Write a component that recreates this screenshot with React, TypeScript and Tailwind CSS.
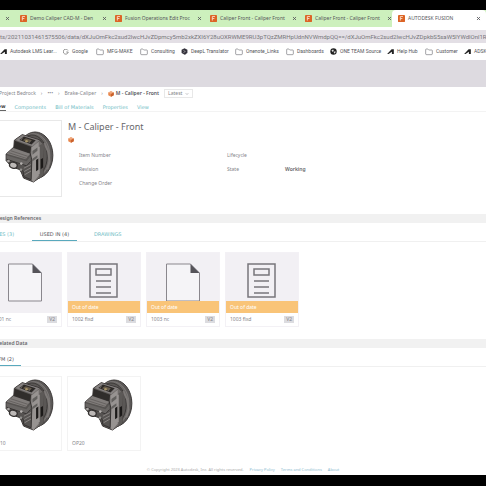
import { ChevronDown, Folder, X } from "lucide-react";

const browserTabs = [
  "Demo Caliper CAD-M - Den",
  "Fusion Operations Edit Proc",
  "Caliper Front - Caliper Front",
  "Caliper Front - Caliper Front",
];

type Bookmark = {
  label: string;
  kind: "autodesk" | "google" | "folder" | "deepl" | "globe";
  width: string;
};

const bookmarks: Bookmark[] = [
  { label: "Autodesk LMS Lear...", kind: "autodesk", width: "w-[63px]" },
  { label: "Google", kind: "google", width: "w-[33px]" },
  { label: "MFG-MAKE", kind: "folder", width: "w-[44px]" },
  { label: "Consulting", kind: "folder", width: "w-[41px]" },
  { label: "DeepL Translator", kind: "deepl", width: "w-[54px]" },
  { label: "Onenote_Links", kind: "folder", width: "w-[51px]" },
  { label: "Dashboards", kind: "folder", width: "w-[44px]" },
  { label: "ONE TEAM Source", kind: "globe", width: "w-[57px]" },
  { label: "Help Hub", kind: "autodesk", width: "w-[38px]" },
  { label: "Customer", kind: "folder", width: "w-[39px]" },
  { label: "ADSK", kind: "autodesk", width: "w-[30px]" },
];

const references = [
  { name: "1001 nc", drawing: false, outOfDate: false },
  { name: "1002 fixd", drawing: true, outOfDate: true },
  { name: "1003 nc", drawing: false, outOfDate: true },
  { name: "1003 fixd", drawing: true, outOfDate: true },
];

function BookmarkIcon({ kind }: { kind: Bookmark["kind"] }) {
  if (kind === "folder") {
    return <Folder className="size-[8px] shrink-0 text-[#77777b]" strokeWidth={2} />;
  }
  if (kind === "google") {
    return (
      <svg viewBox="0 0 24 24" className="size-[6px] shrink-0" fill="none" stroke="#777" strokeWidth="3">
        <path d="M20 6A10 10 0 1 0 21 12H13" />
      </svg>
    );
  }
  if (kind === "deepl") {
    return (
      <svg viewBox="0 0 24 24" className="size-[7px] shrink-0">
        <path d="M12 1l10 5v11l-7 4v3l-4-2-9-5V6z" fill="#34323c" />
        <path d="M8 8l7 4-7 4" fill="none" stroke="#bbb" strokeWidth="2" />
      </svg>
    );
  }
  if (kind === "globe") {
    return (
      <svg viewBox="0 0 24 24" className="size-[7px] shrink-0">
        <circle cx="12" cy="12" r="11" fill="#222" />
        <path d="M5 8l6-3 2 5-4 4zM14 12l6 0-3 7-4-2z" fill="#ddd" />
      </svg>
    );
  }
  return (
    <svg viewBox="0 0 24 18" className="h-[5px] w-[7px] shrink-0">
      <path d="M0 18L16 1h8v17h-7v-8L5 18z" fill="#222" />
    </svg>
  );
}

function Favicon() {
  return (
    <svg viewBox="0 0 24 24" className="size-[7px] shrink-0">
      <rect width="24" height="24" rx="3" fill="#dc6426" />
      <path d="M8 19V5h9M8 12h7" fill="none" stroke="#fbe1cb" strokeWidth="3" />
    </svg>
  );
}

function ModelIcon() {
  return (
    <svg viewBox="0 0 24 24" className="size-[6px] shrink-0">
      <path d="M12 1l11 5v11l-11 6-11-6V6z" fill="#e8874c" />
      <path d="M12 1l11 5-11 6L1 6z" fill="#efaa80" />
      <path d="M12 12l11-6v11l-11 6z" fill="#c9622e" />
    </svg>
  );
}

function Caliper() {
  return (
    <svg viewBox="0 0 148 158" className="h-[52px] w-[49px]">
      {/* Round flange behind the body */}
      <ellipse cx="91" cy="74" rx="54" ry="71" fill="#5b5857" stroke="#3b3837" strokeWidth="3" />
      <ellipse cx="86" cy="75" rx="50" ry="67" fill="#6a6765" stroke="#8b8785" strokeWidth="2" />
      <ellipse cx="81" cy="77" rx="47" ry="65" fill="#5a5755" stroke="#3b3837" strokeWidth="3" />
      <path d="M119 37l12 26 4 30-7 24" fill="none" stroke="#7d7977" strokeWidth="6" />
      {/* Upper housing */}
      <path d="M28 28L52 11l53 16 12 14-2 94-29 20-30-12-31-77z" fill="#5f5b59" stroke="#3a3635" strokeWidth="3" />
      <path d="M31 27l21-15 52 16-20 18z" fill="#858180" />
      <path d="M43 27l14-10 36 11-13 13z" fill="#2c2927" />
      <path d="M54 28l9-6 18 6-8 7z" fill="#675c4b" />
      <circle cx="65" cy="31" r="4" fill="#a79568" />
      <path d="M29 30l50 18-3 22-50-17z" fill="#302d2b" />
      <path d="M53 20l-7 11M78 29l-7 9" stroke="#686461" strokeWidth="3" />
      {/* Side wall with the two slots */}
      <path d="M80 49l24-19 13 12-2 92-29 20-9-8z" fill="#706c6a" />
      <path d="M80 50l22-17v102l-16 21-7-8z" fill="#979391" />
      <path d="M83 61l15-11v10L83 72zM83 84l15-10v7L83 92z" fill="#62605e" />
      <path d="M105 43l11-6v97l-12 12z" fill="#5c5957" />
      <path d="M94 88l8-5v34l-8 5zM108 86l7-4v29l-7 5z" fill="#1c1a19" />
      <path d="M103 48v83" stroke="#aaa6a4" strokeWidth="3" />
      {/* Lower front block */}
      <path d="M3 70l21-19 52 17 5 20-2 60-22-9-3-18-35-13-16-18z" fill="#565351" stroke="#353231" strokeWidth="3" />
      <path d="M4 69l21-17 51 17-14 17z" fill="#817d7b" />
      <path d="M11 66l53 17M17 60l52 17" stroke="#66625f" strokeWidth="3" />
      <path d="M4 74l61 18 12-15v19l-12 12L5 89z" fill="#686563" />
      <path d="M5 86l60 20 12-13" fill="none" stroke="#353231" strokeWidth="3" />
      <path d="M57 113l21-11M58 123l20-11M59 133l19-11" stroke="#898583" strokeWidth="3" />
      <ellipse cx="25" cy="104" rx="12" ry="9" transform="rotate(18 25 104)" fill="#bcb8b6" stroke="#353231" strokeWidth="4" />
      <circle cx="10" cy="91" r="4" fill="#aaa6a4" />
      <circle cx="49" cy="99" r="4" fill="#b1adab" />
      <circle cx="48" cy="118" r="4" fill="#92908d" />
    </svg>
  );
}

function PageIcon() {
  return (
    <svg viewBox="0 0 34 40" className="h-[40px] w-[34px]">
      <path d="M.5 1h24l9 9v28H.5z" fill="#f5f4f7" stroke="#8a878d" strokeWidth="1" />
      <path d="M24.500 1v9h9z" fill="#555359" />
    </svg>
  );
}

function DrawingIcon() {
  return (
    <svg viewBox="0 0 30 36" className="h-[36px] w-[30px]" fill="none" stroke="#78757b" strokeWidth="1.500">
      <path d="M1 1h27v33H1zM7 6h15v6H7zM7 18h15M7 24h15M7 30h15" />
    </svg>
  );
}

function SectionBar({ title }: { title: string }) {
  return (
    <h2 className="-ml-1 h-[9px] bg-[#f1f1f1] text-[5px] leading-[9px] font-semibold text-[#66666a]">{title}</h2>
  );
}

export default function App() {
  return (
    <div className="min-h-screen overflow-hidden bg-black pt-[10px] font-['Noto_Sans',sans-serif] text-[#85858a]">
      {/* Browser chrome */}
      <header className="bg-white font-[Roboto,sans-serif] text-[5px] text-[#55555a]">
        <div className="flex h-[17px] items-stretch bg-[#cdf0bd] font-['Noto_Sans',sans-serif]">
          <div className="flex w-[16px] shrink-0 items-center pl-[5px]">
            <button aria-label="Close tab"><X className="size-[5px]" strokeWidth={4} /></button>
          </div>
          {browserTabs.map((tab, index) => (
            <div key={index} className="flex w-[95px] shrink-0 items-center gap-[3px] pl-1">
              <Favicon />
              <span className="w-[69px] whitespace-nowrap">{tab}</span>
              <button aria-label="Close tab"><X className="size-[5px]" strokeWidth={4} /></button>
            </div>
          ))}
          <div className="-ml-1 flex flex-1 items-center gap-[3px] rounded-t-[4px] bg-white pl-[6px]">
            <Favicon />
            <span className="flex-1 whitespace-nowrap">AUTODESK FUSION</span>
            <button aria-label="Close tab" className="mr-[5px]"><X className="size-[5px]" strokeWidth={4} /></button>
          </div>
        </div>
        <div className="pt-[3px]">
          <input
            aria-label="Address"
            readOnly
            value="ts/20211031461575506/data/dXJuOmFkc2sud2lwcHJvZDpmcy5mb2xkZXI6Y28uOXRWME9RU3pTQzZMRHpUdnNVWmdpQQ==/dXJuOmFkc2sud2lwcHJvZDpkbS5saW5lYWdlOnl1RnZkRG"
            className="block h-[13px] w-full bg-[#e3dfe5] text-[6px] leading-[13px] text-[#77777b]"
          />
        </div>
        <nav className="flex h-[17px] items-center">
          {bookmarks.map((bookmark) => (
            <a
              key={bookmark.label}
              href="#"
              className={`flex shrink-0 items-center gap-[3px] whitespace-nowrap ${bookmark.width}`}
            >
              <BookmarkIcon kind={bookmark.kind} />
              {bookmark.label}
            </a>
          ))}
        </nav>
      </header>

      <div className="h-[27px] bg-[#dddae0]" />

      <main className="bg-white text-[5px]">
        <nav className="flex h-[13px] items-center gap-[5px] whitespace-nowrap">
          <a href="#" className="-ml-[1px]">Project Bedrock</a>
          <span>›</span>
          <span>•••</span>
          <span>›</span>
          <a href="#">Brake-Caliper</a>
          <span>›</span>
          <span className="flex items-center gap-[2px] font-semibold text-[#55555a]">
            <ModelIcon />M - Caliper - Front
          </span>
          <button className="flex h-[9px] items-center gap-[3px] border border-[#e8e8e8] px-[3px]">
            Latest <ChevronDown className="size-[4px]" strokeWidth={3} />
          </button>
        </nav>
        <nav className="flex h-[12px] items-end gap-[9px] border-b border-[#f3f3f3] font-['DejaVu_Sans',sans-serif] leading-[8px] text-[#6fbcc4]">
          <a href="#" className="-ml-[8px] border-b border-[#666] font-semibold text-[#444]">View</a>
          <a href="#">Components</a>
          <a href="#">Bill of Materials</a>
          <a href="#">Properties</a>
          <a href="#">View</a>
        </nav>

        <section className="flex h-[102px] gap-[6px] pt-[8px]">
          <div className="-ml-[14px] flex h-[77px] w-[76px] shrink-0 items-start justify-center border border-[#e8e8e8] pt-[10px] pl-[11px]">
            <Caliper />
          </div>
          <div className="flex-1">
            <h1 className="text-[9px] leading-[13px] text-[#66666a]">M - Caliper - Front</h1>
            <div className="mt-[4px]"><ModelIcon /></div>
            <dl className="mt-[5px] ml-[11px] grid grid-cols-[90px_58px_58px_1fr] leading-[14px]">
              <dt className="col-start-1">Item Number</dt>
              <dt className="col-start-3">Lifecycle</dt>
              <dt className="col-start-1">Revision</dt>
              <dt className="col-start-3">State</dt>
              <dd className="font-semibold text-[#66666a]">Working</dd>
              <dt className="col-start-1">Change Order</dt>
            </dl>
          </div>
        </section>

        <SectionBar title="Design References" />
        <div className="flex h-[19px] items-end border-b border-[#f0f0f0] font-['DejaVu_Sans',sans-serif] leading-[12px] text-[#6fbcc4]">
          <button className="-ml-[8px] h-[14px] w-[40px] text-left">FILES (3)</button>
          <button className="h-[14px] w-[45px] border-b border-[#59a9bd] text-[#55555a]">USED IN (4)</button>
          <button className="ml-[17px] h-[14px]">DRAWINGS</button>
        </div>
        <div className="mt-[10px] -ml-[12px] flex gap-[5px]">
          {references.map((item) => (
            <article key={item.name} className="relative h-[75px] w-[74px] shrink-0 border border-[#f3f1f5]">
              <div className="flex h-[60px] justify-center bg-[#f2f0f4] pt-[10px]">
                {item.drawing ? <DrawingIcon /> : <PageIcon />}
              </div>
              {item.outOfDate && (
                <p className="absolute inset-x-0 top-[48px] h-[12px] bg-[#f9c478] pl-[4px] leading-[12px] text-white">Out of date</p>
              )}
              <div className="flex h-[13px] items-center justify-between px-[4px]">
                <span>{item.name}</span>
                <span className="bg-[#dcdce0] px-[2px] leading-[7px]">V2</span>
              </div>
            </article>
          ))}
        </div>

        <div className="mt-[12px]"><SectionBar title="Related Data" /></div>
        <div className="flex h-[19px] items-end border-b border-[#f0f0f0] font-['DejaVu_Sans',sans-serif] leading-[12px]">
          <button className="-ml-[10px] h-[14px] w-[31px] border-b border-[#59a9bd] pr-[7px] text-right whitespace-nowrap text-[#55555a]">
            RFM (2)
          </button>
        </div>
        <div className="mt-[9px] -ml-[12px] flex gap-[5px]">
          {["OP10", "OP20"].map((name) => (
            <article key={name} className="h-[75px] w-[74px] shrink-0 border border-[#f3f3f3]">
              <div className="flex h-[60px] items-start justify-center pt-[2px] pl-[9px]"><Caliper /></div>
              <p className="pl-[4px] leading-[12px]">{name}</p>
            </article>
          ))}
        </div>

        <footer className="flex h-[24px] items-end justify-center gap-[6px] pb-[2px] text-[4px] text-[#aaa]">
          <span>© Copyright 2023 Autodesk, Inc. All rights reserved.</span>
          <a href="#" className="text-[#8dbbd0]">Privacy Policy</a>
          <a href="#" className="text-[#8dbbd0]">Terms and Conditions</a>
          <a href="#" className="text-[#8dbbd0]">About</a>
        </footer>
      </main>
    </div>
  );
}
